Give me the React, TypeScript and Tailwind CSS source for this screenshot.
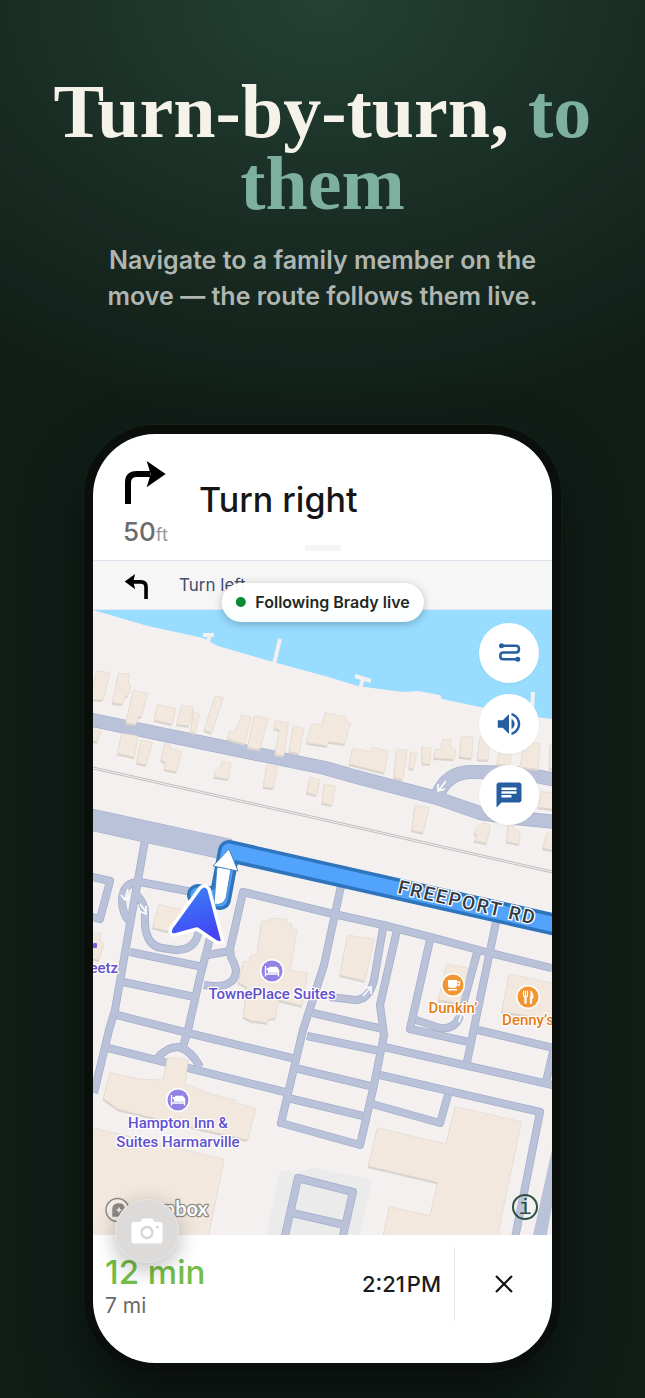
import type { ReactNode } from 'react';

// Service roads and parking aisles, drawn twice (casing, then surface)
const serviceRoads = [
  'M145 840L138 880L129 930L115 1010L109 1030L94 1093',
  'M198 893L140 882Q123 882 122 900Q122 914 130 922',
  'M136 894Q145 904 145 913L145 925Q147 946 162 948L176 950Q196 950 199 930',
  'M210 938L200 977L188 1030L182 1050',
  'M208 955L230 951',
  'M204 985Q236 990 236 970Q235 964 231 957L230 949L243 892L325 912L383 925L430 937L490 953L552 968',
  'M130 952L203 967',
  'M123 982L195 997',
  'M117 1015L188 1033L292 1058',
  'M108 1048L285 1092',
  'M157 1059Q166 1047 178 1047Q190 1049 200 1067',
  'M341 886L324 965L303 1030L281 1123L360 1145L374 1085L384 1035L380 1005L397 930',
  'M383 928L374 980Q369 1000 355 1000L330 997',
  'M313 1013L383 1029',
  'M307 1036L380 1051',
  'M295 1068L370 1086',
  'M288 1098L363 1116',
  'M430 940L410 1029L469 1042',
  'M416 1020L440 1028Q457 1030 461 1012L477 953',
  'M496 922L467 1062',
  'M478 1030L554 1048L546 1082',
  'M384 1047L553 1085',
  'M380 1075L540 1112L515 1238',
  'M372 1104L440 1123L448 1095',
  'M284 1240L298 1178L353 1192L342 1240',
  'M292 1213L345 1225',
  'M88 876L110 881L100 919L88 916',
];

const streets = [
  'M88 719L325 768L353 776L387 785L437 798L480 813L507 817L556 822',
  'M437 797Q446 772 472 772L520 773L556 780',
];

const docks = ['M203 635H214', 'M210 635L207 644', 'M280 639L274 664', 'M355 676L371 681', 'M363 679L360 689', 'M533 692L532 712'];

// Building footprints per map tile, three tile units to a map unit
const tiles = [
  {
    origin: 'translate(85 600) scale(0.3333)',
    shapes: [
      '35,212 75,218 55,300 15,298',
      '100,220 133,222 130,252 138,258 130,285 120,290 112,312 82,308',
      '145,270 188,280 170,350 160,350 153,372 123,368',
      '217,313 272,325 262,372 208,360',
      '290,315 326,322 312,378 275,372',
      '325,335 344,342 330,400 317,395',
      '390,288 415,293 380,398 357,390',
      '470,345 498,352 480,432 428,417 432,395 450,392 460,372',
      '508,347 550,355 525,448 488,442',
      '570,362 610,368 597,467 570,463 583,390 568,385',
      '625,378 657,385 642,460 612,455',
      '685,370 712,376 720,338 783,350 784,364 797,370 790,390 780,432 730,425 727,437 665,428 672,398',
      '15,390 48,393 38,425 15,422',
      '110,400 160,408 148,472 97,460',
      '168,420 203,428 183,495 155,488',
      '240,430 258,437 256,445 290,455 275,515 238,508 240,485 228,480',
      '410,485 438,490 430,538 388,530 390,512 405,508',
      '545,495 578,500 565,565 535,560',
      '675,532 706,540 695,585 665,578',
      '717,552 751,558 741,615 711,608',
    ],
  },
  {
    origin: 'translate(320 600) scale(0.3333)',
    shapes: [
      '98,445 152,455 157,442 205,452 193,518 88,492',
      '230,448 262,450 248,540 222,532',
      '272,455 290,460 280,508 267,503',
      '305,440 333,445 330,492 307,490',
      '368,418 395,420 392,442 407,448 403,478 342,474 345,450 362,447',
      '425,408 460,412 455,475 418,470',
      '480,410 505,415 505,480 472,478',
      '540,455 573,460 570,495 530,492',
      '615,425 660,430 655,508 600,500',
      '690,435 710,435 710,508 688,505',
      '665,575 710,580 710,628 655,622',
      '285,617 327,622 310,698 275,690',
      '470,680 490,668 512,675 500,730 463,722 470,705 463,700',
      '565,665 580,670 580,685 600,695 598,732 560,725',
      '680,700 710,700 710,752 668,745',
      '82,1005 163,1018 135,1143 60,1125',
      '380,1092 445,1105 420,1210 355,1200',
      '568,1122 710,1152 710,1260 545,1235',
    ],
  },
  {
    origin: 'translate(85 820) scale(0.3333)',
    shapes: [
      '222,253 300,272 280,342 203,322',
      '10,340 45,340 46,360 56,375 42,420 10,412',
      '530,303 550,303 550,295 605,297 605,310 620,313 620,325 637,330 615,450 668,458 652,557 580,540 572,595 550,597 547,608 500,603 475,590 485,500 460,487 475,425 493,425 495,410 517,400',
      '75,757 165,778 235,780 248,712 310,720 300,790 345,810 400,828 450,840 450,848 513,865 488,960 360,930 150,880 100,868 55,835',
      '10,920 418,1018 368,1260 10,1260',
    ],
  },
  {
    origin: 'translate(320 1030) scale(0.3333)',
    shapes: ['405,230 605,275 535,605 560,630 187,630 208,530 330,557 353,457 145,408 172,293 378,342'],
  },
];

function Poi({ x, y, color, children }: { x: number; y: number; color: string; children: ReactNode }) {
  return (
    <g transform={`translate(${x} ${y})`}>
      <circle r="12" fill="#fff" />
      <circle r="10.5" fill={color} />
      {children}
    </g>
  );
}

function BedGlyph() {
  return (
    <g fill="none" stroke="#fff" strokeWidth="1.3">
      <path d="M-6.5 -5V5.5M-6.5 3H6.5V5.5M6.5 3V-1" />
      <path d="M-2 -3.5H4.5L6.5 -1V1H-3.5V-1Z" fill="#fff" />
      <circle cx="-4" cy="-2" r="1.3" fill="#fff" stroke="none" />
    </g>
  );
}

function MapLabel({ x, y, color, anchor = 'middle', children }: { x: number; y: number; color: string; anchor?: 'middle' | 'end'; children: string }) {
  return (
    <text
      x={x}
      y={y}
      textAnchor={anchor}
      fill={color}
      stroke="#fff"
      strokeWidth="2.5"
      strokeLinejoin="round"
      paintOrder="stroke"
      className='font-[Roboto,"Liberation_Sans",sans-serif] text-[15px] font-medium'
    >
      {children}
    </text>
  );
}

function StreetMap() {
  return (
    <svg viewBox="93 610 459 625" className="block w-full" role="img" aria-label="Route map">
      <defs>
        <linearGradient id="puck" x1="0" y1="0" x2="0.3" y2="1">
          <stop offset="0" stopColor="#3a86f2" />
          <stop offset="0.7" stopColor="#3f5af6" />
          <stop offset="1" stopColor="#4744f5" />
        </linearGradient>
      </defs>

      <rect x="93" y="610" width="459" height="625" fill="#f3f0ef" />
      <path d="M93 610L148 626L203 638L218 646L273 662L325 676L358 686L380 689L403 692L418 691L440 695L442 699L480 707L520 715L552 719V610Z" fill="#98dcff" />
      <g stroke="#f3f0ef" strokeWidth="4">
        {docks.map((d) => (
          <path key={d} d={d} />
        ))}
      </g>
      <path d="M280 1170L297 1174L312 1167L372 1180L360 1235H266Z" fill="#ecebec" />

      {/* Railway */}
      <g fill="none" stroke="#aaa9a9" strokeWidth="0.7">
        <path d="M93 767L325 819L552 871" />
        <path d="M93 769L325 821L552 873" />
      </g>

      <g fill="none" stroke="#a3adcb" strokeLinejoin="round">
        {serviceRoads.map((d) => (
          <path key={d} d={d} strokeWidth="8" />
        ))}
        {streets.map((d) => (
          <path key={d} d={d} strokeWidth="14" />
        ))}
        <path d="M88 819L230 850" strokeWidth="22" />
      </g>
      <g fill="none" stroke="#bac2da" strokeLinejoin="round">
        {serviceRoads.map((d) => (
          <path key={d} d={d} strokeWidth="6.6" />
        ))}
        {streets.map((d) => (
          <path key={d} d={d} strokeWidth="12.8" />
        ))}
        <path d="M88 819L230 850" strokeWidth="21" />
      </g>
      <path d="M552 1150V1206L547 1235H533Z" fill="#bac2da" />

      {tiles.map((tile) => (
        <g key={tile.origin} transform={tile.origin}>
          {tile.shapes.map((points) => (
            <g key={points}>
              <polygon points={points} fill="#d9d3ce" transform="translate(-2 6)" />
              <polygon points={points} fill="#f2e8de" stroke="#e3d9cf" strokeWidth="2" />
            </g>
          ))}
        </g>
      ))}

      {/* One way arrows */}
      <g fill="none" stroke="#fff" strokeWidth="1.6">
        <path d="M446 781L439 790M438 784V791L445 789" />
        <path d="M128 889L125 899M121 895L125 900L130 897" />
        <path d="M140 904L146 912M146 906V914L139 911" />
        <path d="M363 996L371 987M365 988L371 987V994" />
        <path d="M459 1022L462 1013M457 1015L462 1012L465 1018" />
      </g>

      {/* Active route */}
      <g fill="none" strokeLinecap="round" strokeLinejoin="round">
        <path d="M198 895L220 899L229 851L556 925" stroke="#2e75bd" strokeWidth="22" />
        <path d="M198 895L220 899L229 851L556 925" stroke="#51a3fb" strokeWidth="15" />
      </g>
      <path d="M217 867L231 869L226 898Q223 906 214 904Z" fill="#fff" stroke="#2e75bd" strokeWidth="0.8" />
      <path d="M229 849L238 871L213 866Z" fill="#fff" stroke="#2e75bd" strokeWidth="0.8" strokeLinejoin="round" />
      <path
        d="M200 888L171 928Q168 935 175 935L197 929L216 942Q224 945 222 938L209 889Q205 883 200 888Z"
        fill="url(#puck)"
        stroke="#fff"
        strokeWidth="3.5"
        strokeLinejoin="round"
      />

      <text
        transform="translate(397 893) rotate(13)"
        fill="#333a44"
        stroke="#fff"
        strokeWidth="2.5"
        paintOrder="stroke"
        className="font-[Roboto,sans-serif] text-[19px] font-medium tracking-widest"
      >
        FREEPORT RD
      </text>

      <rect x="93" y="943" width="4" height="5" rx="1" fill="#7c5fe0" />
      <MapLabel x={118} y={973} color="#6250cf" anchor="end">Sheetz</MapLabel>
      <Poi x={272} y={971} color="#9382e3">
        <BedGlyph />
      </Poi>
      <MapLabel x={272} y={999} color="#6250cf">TownePlace Suites</MapLabel>
      <Poi x={178} y={1100} color="#9382e3">
        <BedGlyph />
      </Poi>
      <MapLabel x={178} y={1128} color="#6250cf">Hampton Inn &amp;</MapLabel>
      <MapLabel x={178} y={1147} color="#6250cf">Suites Harmarville</MapLabel>
      <Poi x={453} y={985} color="#f39533">
        <path d="M-5 -5H4V0Q4 3 1 3H-2Q-5 3 -5 0ZM-5 4H4V5.5H-5Z" fill="#fff" />
        <path d="M4 -3H6.5V0H4" fill="none" stroke="#fff" strokeWidth="1.3" />
      </Poi>
      <MapLabel x={453} y={1013} color="#e57c16">Dunkin’</MapLabel>
      <Poi x={528} y={997} color="#f39533">
        <g stroke="#fff" strokeLinecap="round">
          <path d="M-2.5 0V6M3 0V6" strokeWidth="2.2" />
          <path d="M-4.5 -6V-2Q-4.5 0 -2.5 0Q-0.5 0 -0.5 -2V-6M-2.5 -6V-1" strokeWidth="1.2" fill="none" />
          <path d="M3 1V-6Q5.5 -3 5 1Z" fill="#fff" strokeWidth="1" />
        </g>
      </Poi>
      <MapLabel x={528} y={1025} color="#e57c16">Denny’s</MapLabel>

      {/* Map provider mark */}
      <g stroke="#8f8a86" strokeWidth="1.5" fill="#f4efea">
        <circle cx="117.5" cy="1210" r="11.5" />
        <path d="M113 1216V1209Q113 1204 119 1204Q124 1204 124 1209Q124 1216 117 1216Z" fill="#8f8a86" />
        <path d="M119 1206.5L120 1209L122.5 1210L120 1211L119 1213.5L118 1211L115.5 1210L118 1209Z" stroke="none" />
      </g>
      <text
        x="208"
        y="1216"
        textAnchor="end"
        fill="#fff"
        stroke="#8f8a86"
        strokeWidth="2.5"
        strokeLinejoin="round"
        paintOrder="stroke"
        className="font-[Lato,sans-serif] text-[20px] font-bold"
      >
        mapbox
      </text>
    </svg>
  );
}

function MapButton({ label, children }: { label: string; children: ReactNode }) {
  return (
    <button type="button" aria-label={label} className="flex size-15 items-center justify-center rounded-full bg-white text-[#265e9f] shadow-xs">
      <svg viewBox="0 0 24 24" className="size-[30px]" fill="currentColor">
        {children}
      </svg>
    </button>
  );
}

export default function App() {
  return (
    <main className='flex min-h-screen flex-col bg-[#111e18] bg-[radial-gradient(ellipse_90%_420px_at_50%_0,#234134_0%,#1b3027_45%,#111e18_100%)] pb-[26px] font-[Inter,"Liberation_Sans",sans-serif]'>
      <header className="px-4 pt-[75px] text-center">
        <h1 className='font-["Liberation_Serif",serif] text-[76px] leading-[72px] font-bold text-[#f5f2ea]'>
          Turn-by-turn, <span className="text-[#7db0a1]">to them</span>
        </h1>
        <p className="mx-auto mt-[23px] max-w-[460px] text-[25px] leading-9 font-semibold text-[#afb6b0]">
          Navigate to a family member on the move — the route follows them live.
        </p>
      </header>

      <section className="relative mx-21 mt-[111px] rounded-[71px] border-9 border-[#0a0f0b] shadow-[0_30px_60px_rgba(0,0,0,0.5),0_0_0_1px_rgba(255,255,255,0.03)]">
        <div className="overflow-hidden rounded-[62px] bg-white">
          <div className="relative flex h-[127px] gap-7 border-b border-[#dfe1ec] pt-[27px] pl-[30px]">
            <div className="flex w-12 flex-col gap-[11px]">
              <svg viewBox="0 0 132 132" className="size-11">
                <path d="M15 129V65Q15 39 41 39H82" fill="none" stroke="#000" strokeWidth="18" />
                <path d="M71 0L128 39L71 79L83 39Z" />
              </svg>
              <p className="text-[26px] leading-8 font-medium whitespace-nowrap text-[#6b6b6b]">
                50<span className="text-lg font-normal text-[#969696]">ft</span>
              </p>
            </div>
            <h2 className="pt-[18px] text-[34px] leading-[42px] font-medium text-[#161616]">Turn right</h2>
            <div className="absolute bottom-[9px] left-1/2 h-[6px] w-9 -translate-x-1/2 rounded-full bg-[#f5f5f5]" />
          </div>

          <div className="flex h-[49px] items-center gap-[30px] border-b border-[#e8e9ef] bg-[#f6f6f6] pt-[2px] pl-[31px]">
            <svg viewBox="0 0 72 76" className="size-[25px]">
              <path d="M65 76V40Q65 24 49 24H22" fill="none" stroke="#000" strokeWidth="11" />
              <path d="M32 0L0 23L32 46L26 23Z" />
            </svg>
            <p className="text-[17px] text-[#424e70]">Turn left</p>
          </div>

          <div className="relative">
            <StreetMap />
            <div className="absolute top-[13px] right-[13px] flex flex-col gap-[11px]">
              <MapButton label="Route options">
                <path d="M6 6.2H17.5Q20 6.2 20 8.9Q20 11.6 17.5 11.6H7.5Q5 11.6 5 14.3Q5 17 7.5 17H18.5" fill="none" stroke="currentColor" strokeWidth="2" />
                <circle cx="6" cy="6.2" r="2" />
                <circle cx="19" cy="17" r="2" />
              </MapButton>
              <MapButton label="Sound">
                <path d="M3 9v6h4l5 5V4L7 9H3zm13.5 3c0-1.77-1.02-3.29-2.5-4.03v8.05c1.48-.73 2.5-2.25 2.5-4.02zM14 3.23v2.06c2.89.86 5 3.54 5 6.71s-2.11 5.85-5 6.71v2.06c4.01-.91 7-4.49 7-8.77s-2.99-7.86-7-8.77z" />
              </MapButton>
              <MapButton label="Report">
                <path d="M20 2H4c-1.1 0-1.99.9-1.99 2L2 22l4-4h14c1.1 0 2-.9 2-2V4c0-1.1-.9-2-2-2zM6 9h12v2H6V9zm8 5H6v-2h8v2zm4-6H6V6h12v2z" />
              </MapButton>
            </div>
            <button
              type="button"
              aria-label="Map information"
              className="absolute right-[14px] bottom-[15px] flex size-[26px] items-center justify-center rounded-full border-2 border-[#2a5141] pt-1 font-['Liberation_Mono',monospace] text-[22px] leading-none text-[#2a5141]"
            >
              i
            </button>
            <div className="absolute -top-[27px] left-1/2 flex h-[39px] -translate-x-1/2 items-center gap-[10px] rounded-full bg-white/95 px-[14px] pb-[2px] whitespace-nowrap shadow-[0_2px_8px_rgba(0,0,0,0.25)]">
              <span className="size-[10px] rounded-full bg-[#0a8a33]" />
              <span className="text-[16px] font-semibold text-[#1f2a25]">Following Brady live</span>
            </div>
          </div>

          <footer className="relative flex h-32 pt-3 pl-3">
            <div className="flex-1 pt-1">
              <p className="text-[33px] leading-[42px] font-medium text-[#74bd48]">12 min</p>
              <p className="text-[21px] leading-[26px] text-[#6a6a6a]">7 mi</p>
            </div>
            <p className="flex h-[74px] items-center border-r border-[#e6e6ea] pr-[13px] text-[22px] font-medium text-[#1c1c1c]">2:21&#8202;PM</p>
            <button type="button" aria-label="End navigation" className="flex h-[74px] w-[97px] items-center justify-center">
              <svg viewBox="0 0 18 18" className="size-[18px]" fill="none" stroke="#111" strokeWidth="2.2">
                <path d="M1 1L17 17M17 1L1 17" />
              </svg>
            </button>
            <button
              type="button"
              aria-label="Take photo"
              className="absolute -top-9 left-[22px] flex size-16 items-center justify-center rounded-full border border-white/30 bg-[#dddbd9] shadow-[0_6px_22px_rgba(0,0,0,0.28)]"
            >
              <svg viewBox="0 0 32 26" className="h-[26px] w-8">
                <path d="M3 4H9L11 1.5Q12 0.5 13 0.5H20Q21 0.5 22 1.5L24 4H29Q31.5 4 31.5 6.5V23Q31.5 25.5 29 25.5H3Q0.5 25.5 0.5 23V6.5Q0.5 4 3 4Z" fill="#fff" />
                <circle cx="16" cy="14.5" r="5.5" fill="none" stroke="#d8d5d2" strokeWidth="2.3" />
                <circle cx="26.5" cy="9" r="1.5" fill="#d8d5d2" />
              </svg>
            </button>
          </footer>
        </div>
      </section>
    </main>
  );
}
